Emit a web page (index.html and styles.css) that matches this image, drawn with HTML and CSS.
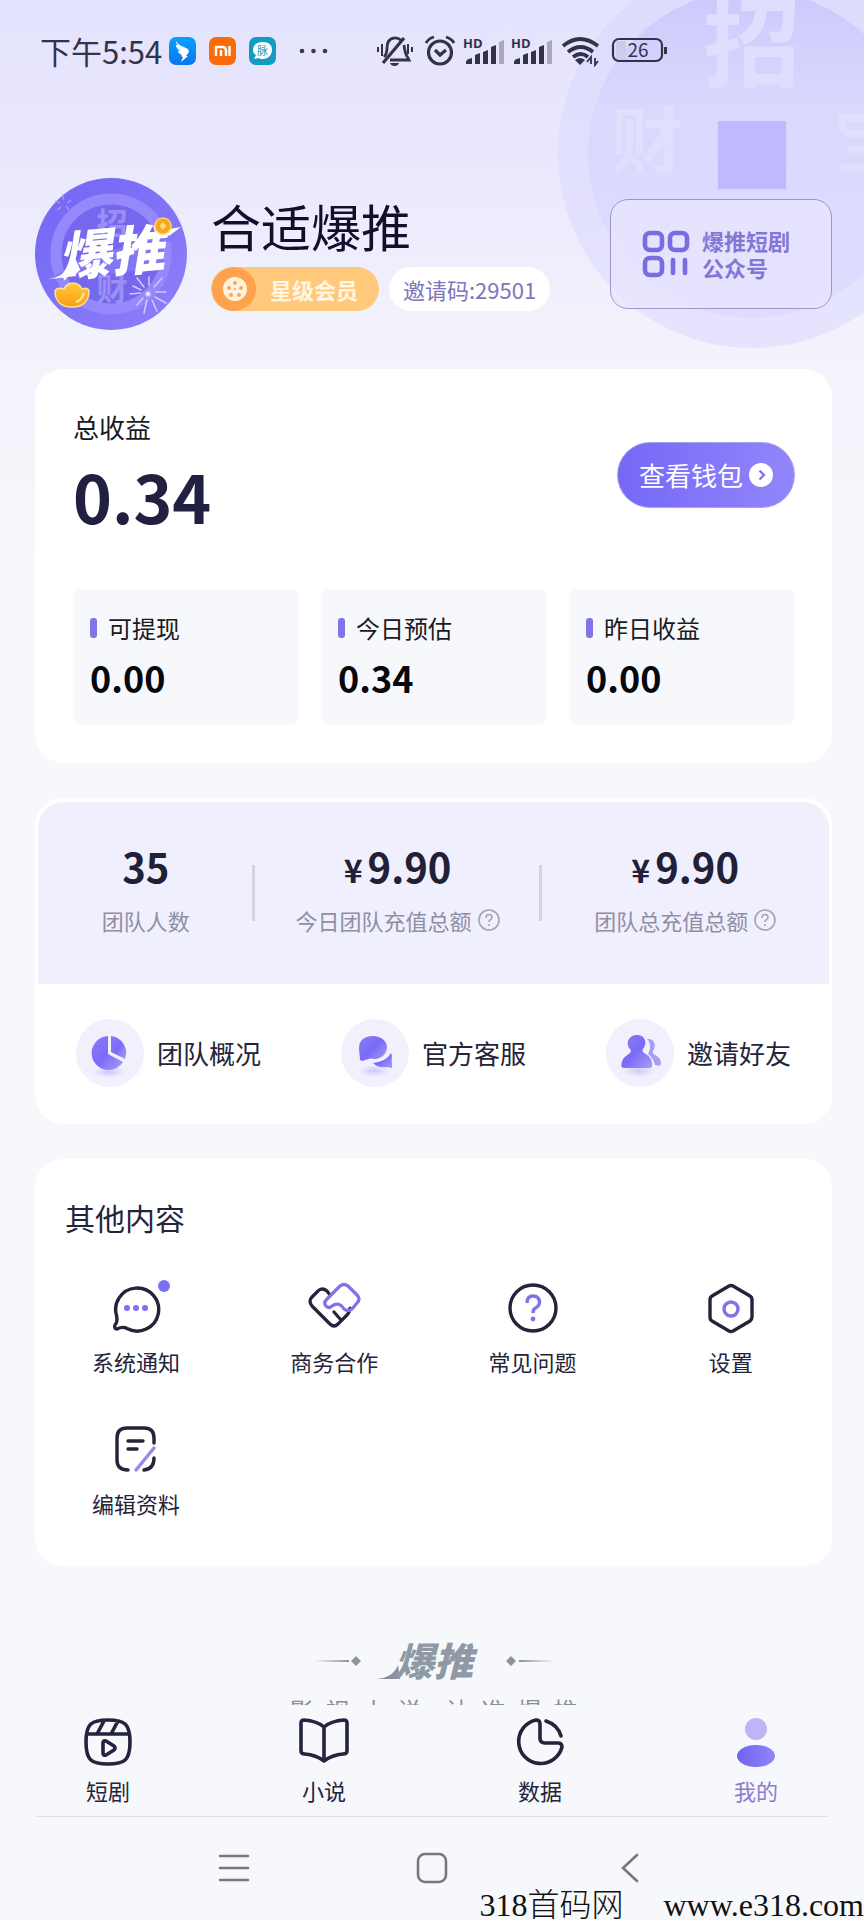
FILE: index.html
```html
<!DOCTYPE html>
<html lang="zh-CN">
<head>
<meta charset="utf-8">
<meta name="viewport" content="width=device-width, initial-scale=1">
<title>我的</title>
<link rel="stylesheet" href="styles.css">
</head>
<body>
<svg class="coin-bg" viewBox="0 41 307 349" aria-hidden="true">
  <defs>
    <linearGradient id="coinIn" x1="0" y1="0" x2="0" y2="1"><stop offset="0" stop-color="#cbc9fc"/><stop offset=".35" stop-color="#d9d8fd"/><stop offset="1" stop-color="#dfdcfd"/></linearGradient>
    <linearGradient id="coinOut" x1="0" y1="0" x2="0" y2="1"><stop offset="0" stop-color="#dcdbfd"/><stop offset="1" stop-color="#e6e4fd"/></linearGradient>
  </defs>
  <circle cx="195" cy="195" r="194" fill="url(#coinOut)"/>
  <circle cx="195" cy="195" r="164" fill="url(#coinIn)"/>
  <g class="coin-char" text-anchor="middle">
    <text x="195" y="120" font-size="98" fill="#dfdefe">招</text>
    <text x="90" y="208" font-size="72" fill="#e1dffe">财</text>
    <text x="312" y="208" font-size="72" fill="#e1dffe">宝</text>
  </g>
  <path d="M161 162h68v68h-68z" fill="#bfb9fe"/>
</svg>

<header class="status">
  <span class="time">下午5:54</span>
  <svg class="apps" viewBox="0 0 160 28" width="160" height="28" aria-hidden="true">
    <defs><linearGradient id="dd" x1="0" y1="0" x2="0" y2="1"><stop offset="0" stop-color="#0aa0fb"/><stop offset="1" stop-color="#0877f0"/></linearGradient></defs>
    <rect width="27" height="28" rx="7" fill="url(#dd)"/>
    <path d="M7 4c2 4 6 5 12 8l1 3-3 4h2l-7 6 2-5-2-1 1-1c-3-1-4-3-4-4l2 0c-3-2-4-4-4-6l2 0C7 7 7 5 7 4z" fill="#fff"/>
    <rect x="40" width="27" height="28" rx="7" fill="#fb6a07"/>
    <path d="M47 19v-9h6q4 0 4 4v5M52 13v6M60.500 9v10" fill="none" stroke="#fff" stroke-width="2.400"/>
    <rect x="80" width="27" height="28" rx="7" fill="#119dc2"/>
    <path d="M94 5c6 0 9 3 9 8s-4 9-9 9c-2 0-3 0-4-1l-5 1 2-4c-2-1-3-3-3-5 0-5 4-8 10-8z" fill="#fff"/>
    <text x="93.500" y="18" font-size="11" text-anchor="middle" fill="#119dc2">脉</text>
    <g fill="#3b3950"><circle cx="133" cy="14" r="2.300"/><circle cx="144.500" cy="14" r="2.300"/><circle cx="156" cy="14" r="2.300"/></g>
  </svg>
  <svg class="signals" viewBox="0 0 296 32" width="296" height="32" aria-hidden="true" fill="none" stroke="#34324a">
    <g stroke-width="2.800">
      <path d="M28 3 7 28" stroke-width="3.200"/>
      <path d="M8 22q3-3 3-9 0-9 7-10 4-1 8 3M28 10q1 9 4 13l1 2H14" />
      <path d="M2 12v5M6 9v12M32 9v10M36 12v5" stroke-width="2"/>
    </g>
    <path d="M14 28h9q-1 3-4.500 3T14 28z" fill="#34324a" stroke="none"/>
    <g stroke-width="3.200"><circle cx="64" cy="17.500" r="11.500"/><path d="m59 15 5 5 6-5"/><path d="M50 8q3-5 8-6M70 2q6 2 8 6" stroke-width="2.800"/></g>
    <g stroke="none" fill="#34324a" id="sig">
      <text x="87" y="13" font-size="13" class="hd">HD</text>
      <path d="M90 29v-2q0-3 6-4v6zM99 29V20l5-2v11zM107 29v-12l5-2v14zM115 29V12l5-2v19z"/>
      <path d="M123 7l5-2v24h-5z" fill="#a9a6c2"/>
    </g>
    <use href="#sig" x="48"/>
    <path d="M187 11q17-14 35 0M192 17q13-10 25 0M197 22q8-6 15 0" stroke-width="3.800"/>
    <path d="m199 25q5-4 10 0l-5 5z" fill="#34324a" stroke="none"/>
    <path d="M215 29v-7l-4 5M219 23v7l3-4" stroke-width="1.800"/>
    <rect x="240" y="6" width="10" height="19" rx="2" fill="#cfccea" stroke="none"/>
    <rect x="237" y="4" width="49" height="22" rx="6" stroke-width="2.200"/>
    <path d="M289.500 12v7" stroke-width="3"/>
    <text x="262" y="22" font-size="19" text-anchor="middle" fill="#34324a" stroke="none">26</text>
  </svg>
</header>

<main>
  <section class="profile">
    <svg class="avatar" viewBox="0 0 152 152" width="152" height="152" role="img" aria-label="爆推">
      <defs>
        <linearGradient id="av" x1="0" y1="0" x2="1" y2="1"><stop offset="0" stop-color="#7265f4"/><stop offset="1" stop-color="#8f80fa"/></linearGradient>
        <linearGradient id="go" x1="0" y1="0" x2="0" y2="1"><stop offset="0" stop-color="#ffc93c"/><stop offset="1" stop-color="#fb9d12"/></linearGradient>
      </defs>
      <circle cx="76" cy="76" r="76" fill="url(#av)"/>
      <circle cx="76" cy="76" r="55" fill="#7668ee" stroke="#9488fa" stroke-width="11"/>
      <g text-anchor="middle" fill="#9a90f4" font-weight="700" font-size="31"><text x="77" y="57">招</text><text x="77" y="122">财</text></g>
      <path d="M8 101q20-3 27-17l100-28 11-7-9 14-8 3v24l-40 4-50 5z" fill="#8378f2"/>
      <path d="M8 102q22-2 30-18l3 14q-18 2-33 4zM128 52l18-3-12 9z" fill="#fff"/>
      <text class="logo-text" transform="rotate(-5 76 76)" x="76" y="94" font-size="53" text-anchor="middle" fill="#fff">爆推</text>
      <circle cx="128" cy="48" r="8" fill="#f9a51f" stroke="#ffd36a" stroke-width="1.500"/><path d="m128 44 3.500 4-3.500 4-3.500-4z" fill="#ffd97a"/>
      <path d="M20 113q2-4 9-2 3-6 9-6t9 6q6-2 7 2c0 9-5 16-17 16s-17-7-17-16z" fill="url(#go)" stroke="#ffe09a" stroke-width="1.500"/>
      <path d="M41 124q6-2 8-9" stroke="#ffe58e" stroke-width="2.500" fill="none"/>
      <g stroke="#cfc9ff" stroke-width="1.600" stroke-linecap="round"><path d="M109 109l-7-9M114 107v-8M119 109l8-9M121 114h10M120 119l11 6M117 122l5 11M112 122l-3 13M108 120l-6 7M105 115l-10 1M106 112l-8-4"/><circle cx="113" cy="116" r="2" fill="#fff"/></g>
      <path d="M28 16v6M20 23l5 2M36 22l-4 3M22 32l4-3M34 32l-3-4" stroke="#a9a0ff" stroke-width="1.200"/>
    </svg>
    <div class="who">
      <h1>合适爆推</h1>
      <div class="tags">
        <span class="tag vip">
          <svg viewBox="0 0 46 44" width="46" height="44" aria-hidden="true"><circle cx="23" cy="22" r="22" fill="#ffa24d"/><circle cx="24" cy="22" r="12" fill="#fff3e0"/><g fill="#ffa557"><circle cx="24" cy="16" r="2"/><circle cx="18" cy="21" r="2"/><circle cx="30" cy="21" r="2"/><circle cx="24" cy="22" r="1"/><circle cx="20" cy="28" r="2"/><circle cx="28" cy="28" r="2"/></g></svg>
          <span class="vip-text">星级会员</span>
        </span>
        <span class="tag code">邀请码:29501</span>
      </div>
    </div>
    <button class="official" type="button">
      <svg viewBox="0 0 48 48" width="48" height="48" fill="none" stroke="#7a6be0" stroke-width="4.600" aria-hidden="true"><rect x="3" y="3" width="17" height="17" rx="5"/><rect x="28" y="3" width="17" height="17" rx="5"/><rect x="3" y="28" width="17" height="17" rx="5"/><path d="M31 30v13M43 30v13" stroke-linecap="round"/></svg>
      <span>爆推短剧<br>公众号</span>
    </button>
  </section>

  <section class="card income">
    <div class="total">
      <div><h2>总收益</h2><p class="big">0.34</p></div>
      <button class="wallet" type="button">查看钱包<svg viewBox="0 0 24 24" width="24" height="24" aria-hidden="true"><circle cx="12" cy="12" r="12" fill="#fff"/><path d="m10.500 7.500 4.500 4.500-4.500 4.500" fill="none" stroke="#7e72e8" stroke-width="2.200"/></svg></button>
    </div>
    <dl class="boxes">
      <div><dt>可提现</dt><dd>0.00</dd></div>
      <div><dt>今日预估</dt><dd>0.34</dd></div>
      <div><dt>昨日收益</dt><dd>0.00</dd></div>
    </dl>
  </section>

  <section class="card team">
    <dl class="stats">
      <div><dd>35</dd><dt>团队人数</dt></div>
      <div><dd><small>¥</small>9.90</dd><dt>今日团队充值总额<svg viewBox="0 0 22 22" width="22" height="22" fill="none" stroke="#a5a3b8" stroke-width="1.600" aria-hidden="true"><circle cx="11" cy="11" r="10"/><path d="M8 9q0-3.500 3-3.500t3 3q0 1.500-2 2.500-1 .5-1 2M11 15v2"/></svg></dt></div>
      <div><dd><small>¥</small>9.90</dd><dt>团队总充值总额<svg viewBox="0 0 22 22" width="22" height="22" fill="none" stroke="#a5a3b8" stroke-width="1.600" aria-hidden="true"><circle cx="11" cy="11" r="10"/><path d="M8 9q0-3.500 3-3.500t3 3q0 1.500-2 2.500-1 .5-1 2M11 15v2"/></svg></dt></div>
    </dl>
    <nav class="links">
      <a href="#team"><svg viewBox="0 0 68 68" width="68" height="68" aria-hidden="true"><defs><linearGradient id="pu" x1="0" y1="0" x2="1" y2="1"><stop offset="0" stop-color="#8a7df2"/><stop offset=".5" stop-color="#7a6bf8"/><stop offset="1" stop-color="#a89ff6"/></linearGradient><radialGradient id="sh"><stop offset="0" stop-color="#cdc7fb"/><stop offset="1" stop-color="#f2f0fd"/></radialGradient></defs><circle cx="34" cy="34" r="34" fill="#f2f0fd"/><ellipse cx="33" cy="53" rx="17" ry="6" fill="url(#sh)"/><path d="M32 17v18l15 8A17 17 0 1 1 32 17z" fill="url(#pu)"/><path d="M35 17a17 17 0 0 1 14 23l-14-7z" fill="url(#pu)"/></svg>团队概况</a>
      <a href="#service"><svg viewBox="0 0 68 68" width="68" height="68" aria-hidden="true"><circle cx="34" cy="34" r="34" fill="#f2f0fd"/><ellipse cx="33" cy="52" rx="16" ry="6" fill="url(#sh)"/><path d="M32 17c8 0 14 5 14 11 0 7-6 12-12 12-3 0-4-1-6 0l-7 2-2-1c0-4-1-8-1-12 0-8 6-12 14-12z" fill="url(#pu)"/><path d="M50 34c2 4 0 7 1 10v5l-6-1c-6 1-10-1-13-4 8-1 15-4 18-10z" fill="url(#pu)"/></svg>官方客服</a>
      <a href="#invite"><svg viewBox="0 0 68 68" width="68" height="68" aria-hidden="true"><circle cx="34" cy="34" r="34" fill="#f2f0fd"/><ellipse cx="33" cy="52" rx="16" ry="6" fill="url(#sh)"/><path d="M41 20c7-1 10 6 6 12-2 4 7 4 8 11 1 4-2 4-6 3-2-7-5-9-7-11 3-5 3-11-1-15z" fill="#a79ef5"/><path d="M31 16c8 0 11 8 6 14-3 5 8 4 9 14 1 5-1 5-4 5H18c-3 0-3-3-2-6 2-8 12-8 8-13-5-6-1-14 7-14z" fill="url(#pu)"/></svg>邀请好友</a>
    </nav>
  </section>

  <section class="card other">
    <h2>其他内容</h2>
    <nav class="grid">
      <a href="#notice"><span class="ico"><svg viewBox="0 0 54 54" width="54" height="54" fill="none" stroke="#25233a" stroke-width="3.400" stroke-linejoin="round" aria-hidden="true"><path d="M8 36A21.500 21.500 0 1 1 18 47.500Q14 45 8 48 5 48 6 44 9 41 7.500 35"/><g fill="#8073ea" stroke="none"><circle cx="18" cy="27" r="3"/><circle cx="27" cy="27" r="3"/><circle cx="36" cy="27" r="3"/></g></svg><i class="dot"></i></span>系统通知</a>
      <a href="#biz"><span class="ico"><svg viewBox="0 0 54 54" width="54" height="54" fill="none" stroke-width="3.200" stroke-linejoin="round" stroke-linecap="round" aria-hidden="true"><path d="M23 14l-3-4q-5-4-9 0l-6 6q-4 4 0 9l18 18q4 4 8 0l9-9q3-3 3-7M27 31l7 8" stroke="#25233a"/><path d="M20 18 33 5q4-3 8 0l9 9q4 4 0 8l-5 6q-4 3-8 0-5-8-12-3-3 3-6 0t1-7z" stroke="#8073ea"/></svg></span>商务合作</a>
      <a href="#faq"><span class="ico"><svg viewBox="0 0 54 54" width="54" height="54" fill="none" stroke-width="3.400" aria-hidden="true"><circle cx="27" cy="27" r="23" stroke="#25233a"/><path d="M21 22q0-7 6-7t6.500 6q0 4-4 6-2.500 1-2.500 5" stroke="#8073ea"/><circle cx="27" cy="38" r="2.400" fill="#8073ea"/></svg></span>常见问题</a>
      <a href="#settings"><span class="ico"><svg viewBox="0 0 54 54" width="54" height="54" fill="none" stroke-width="3.400" stroke-linejoin="round" aria-hidden="true"><path d="M25 5q2-1 4 0l17 10q2 1 2 4v17q0 2-2 4L29 50q-2 1-4 0L8 40q-2-1-2-4V19q0-3 2-4z" stroke="#25233a"/><circle cx="27" cy="28" r="7" stroke="#8073ea"/></svg></span>设置</a>
      <a href="#edit"><span class="ico"><svg viewBox="0 0 54 54" width="54" height="54" fill="none" stroke="#25233a" stroke-width="3.400" stroke-linecap="round" aria-hidden="true"><path d="M45 20v-5q0-10-10-10H18Q8 5 8 15v22q0 10 11 10M45 35q0 11-10 12M19 18h15M19 26h9"/><path d="M45 25 27 47" stroke="#9689ea"/></svg></span>编辑资料</a>
    </nav>
  </section>

  <footer class="slogan">
    <svg viewBox="0 0 242 40" width="242" height="40" role="img" aria-label="爆推">
      <defs><linearGradient id="l1"><stop offset="0" stop-color="#9a9da5" stop-opacity="0"/><stop offset="1" stop-color="#8c8f98"/></linearGradient><linearGradient id="l2"><stop offset="0" stop-color="#8c8f98"/><stop offset="1" stop-color="#9a9da5" stop-opacity="0"/></linearGradient></defs>
      <path d="M0 19h36v2H0z" fill="url(#l1)"/><path d="m43 15 5 5-5 5-5-5zM198 15l5 5-5 5-5-5z" fill="#8f929b"/><path d="M206 19h36v2h-36z" fill="url(#l2)"/>
      <path d="M63 38q17-1 22-14l2 14z" fill="#8a919d"/>
      <text class="logo-text" x="121" y="35" font-size="39" text-anchor="middle" fill="#8f99a5">爆推</text>
    </svg>
    <p class="tagline"><span>影</span><span>视</span><span>小</span><span>说</span><span class="gap">认</span><span>准</span><span>爆</span><span>推</span></p>
  </footer>
</main>

<nav class="tabs">
  <a href="#drama"><svg viewBox="0 0 50 50" width="50" height="50" fill="none" stroke="#25233f" stroke-width="3.600" stroke-linejoin="round" aria-hidden="true"><path d="M25 3c17 0 22 4 22 22s-5 22-22 22S3 43 3 25 8 3 25 3zM4 17h42M21 4l-7 13M35 4l-7 13M20 26q0-3 3-2l8 5q2 2 0 4l-8 5q-3 1-3-2z"/></svg>短剧</a>
  <a href="#novel"><svg viewBox="0 0 50 50" width="50" height="50" fill="none" stroke="#25233f" stroke-width="3.600" stroke-linejoin="round" aria-hidden="true"><path d="M25 10Q18 4 5 3 2 3 2 6v28q0 3 4 3 11 1 19 7 8-6 19-7 4 0 4-3V6q0-3-3-3-13 1-20 7zM25 10v34"/></svg>小说</a>
  <a href="#data"><svg viewBox="0 0 50 50" width="50" height="50" fill="none" stroke="#25233a" stroke-width="3.600" stroke-linecap="round" stroke-linejoin="round" aria-hidden="true"><path d="M21 3q4 0 4 4v14q0 5 5 5h13q4 0 4 4A22 22 0 1 1 21 3zM31 4q12 4 15 15"/></svg>数据</a>
  <a href="#me" class="active" aria-current="page"><svg viewBox="0 0 50 50" width="50" height="50" aria-hidden="true"><defs><linearGradient id="me"><stop offset="0" stop-color="#7063ee"/><stop offset="1" stop-color="#9086fb"/></linearGradient></defs><circle cx="25" cy="12" r="11" fill="#bfb4f6"/><ellipse cx="25" cy="39" rx="19" ry="11" fill="url(#me)"/></svg>我的</a>
</nav>

<div class="system">
  <button type="button" aria-label="最近任务"><svg viewBox="0 0 32 32" width="32" height="32"><path d="M2 4h28M2 16h28M2 28h28"/></svg></button>
  <button type="button" aria-label="主屏幕"><svg viewBox="0 0 32 32" width="32" height="32"><rect x="2" y="2" width="28" height="28" rx="7"/></svg></button>
  <button type="button" aria-label="返回"><svg viewBox="0 0 32 32" width="32" height="32"><path d="M23 3 9 16l14 13"/></svg></button>
</div>
<p class="mark"><span>318首码网</span><span>www.e318.com</span></p>
</body>
</html>
```
FILE: styles.css
```css
* { box-sizing: border-box; }
h1, h2, p, dl, dd, dt { margin: 0; font-weight: 400; }
a { color: inherit; text-decoration: none; }
button { font: inherit; border: 0; background: none; padding: 0; cursor: pointer; }
svg { display: block; flex: none; }

body {
  margin: 0;
  position: relative;
  min-height: 100vh;
  display: flex;
  flex-direction: column;
  font-family: "Noto Sans CJK SC", "Noto Sans", sans-serif;
  font-size: 22px;
  line-height: 32px;
  color: #25243a;
  background: #f6f8fb linear-gradient(#e4e3fe, #eae8fd 160px, #f2f2fc 330px, #f6f8fb 560px) no-repeat;
}

.coin-bg { position: absolute; top: 0; right: 0; width: 307px; height: 349px; z-index: -1; }
.coin-char { font-weight: 700; }
.logo-text { font-weight: 900; font-style: italic; }

/* status bar */
.status { display: flex; align-items: center; height: 102px; padding: 0 40px; color: #34324a; }
.time { font-size: 31px; }
.apps { margin-left: 7px; }
.signals { margin-left: 47px; }
.hd { font-family: "Open Sans", sans-serif; font-weight: 700; }

main { flex: 1; padding: 76px 32px 0 35px; }

/* profile */
.profile { display: flex; align-items: center; height: 152px; margin-bottom: 39px; }
.who { flex: 1; margin-left: 24px; }
.who h1 { font-size: 50px; line-height: 56px; color: #110f2b; margin-bottom: 14px; }
.tags { display: flex; gap: 10px; }
.tag { display: flex; align-items: center; height: 44px; border-radius: 22px; }
.vip { width: 168px; background: #ffc97c; color: #fff6e4; font-weight: 700; }
.vip-text { margin-left: 13px; }
.code { padding: 0 14px; background: #fff; color: #7e76b8; }
.official {
  display: flex; align-items: center; justify-content: center; gap: 12px;
  width: 222px; height: 110px; padding-right: 10px;
  border: 1px solid #9d97c6; border-radius: 18px;
  background: rgba(232, 229, 254, .75);
  color: #8277d6; font-weight: 700; line-height: 27px; text-align: left;
}

/* cards */
.card { background: #fff; border-radius: 28px; margin-bottom: 35px; }

.income { padding: 39px 37px 38px 38px; }
.total { display: flex; justify-content: space-between; height: 181px; }
.total h2 { font-size: 26px; line-height: 38px; color: #1a1a22; }
.big { font-size: 66px; line-height: 98px; font-weight: 700; color: #212040; }
.wallet {
  display: flex; align-items: center; justify-content: center; gap: 6px;
  width: 178px; height: 66px; margin-top: 34px; border-radius: 33px;
  border: 1px solid #a9a0f2;
  background: linear-gradient(90deg, #7568f7, #9286fb);
  color: #fff; font-size: 26px;
}
.boxes { display: grid; grid-template-columns: repeat(3, 1fr); gap: 22px; }
.boxes div { height: 136px; padding: 22px 17px; border-radius: 8px; background: #f7f8fb; }
.boxes dt { display: flex; align-items: center; gap: 11px; font-size: 24px; line-height: 34px; color: #1a1a22; }
.boxes dt::before { content: ""; width: 7px; height: 20px; border-radius: 3px; background: #8175ea; }
.boxes dd { font-size: 36px; line-height: 64px; font-weight: 700; color: #08080c; }

.team { padding: 4px 3px 0; }
.stats { display: grid; grid-template-columns: 3fr 4fr 4fr; height: 182px; padding-top: 34px; background: #f0effe; border-radius: 26px 26px 0 0; text-align: center; }
.stats div { position: relative; }
.stats div + div::before { content: ""; position: absolute; left: -2px; top: 29px; width: 3px; height: 56px; background: #d3d1e6; }
.stats dd { font-size: 40px; line-height: 60px; height: 64px; font-weight: 700; color: #212036; }
.stats small { font-size: 32px; line-height: 32px; margin-right: 5px; }
.stats dt { display: flex; justify-content: center; align-items: center; gap: 6px; line-height: 40px; color: #908ea3; }
.links { display: flex; justify-content: space-between; align-items: center; height: 140px; padding: 0 38px 2px; font-size: 26px; }
.links a { display: flex; align-items: center; gap: 13px; }

.other { padding: 37px 2px 27px; }
.other h2 { font-size: 30px; line-height: 42px; padding-left: 28px; margin-bottom: 43px; }
.grid { display: grid; grid-template-columns: repeat(4, 1fr); row-gap: 26px; }
.grid a { display: flex; flex-direction: column; align-items: center; gap: 10px; height: 116px; }
.ico { position: relative; }
.dot { position: absolute; top: -1px; right: -7px; width: 12px; height: 12px; border-radius: 50%; background: #7c70f2; }

/* slogan */
.slogan { display: flex; flex-direction: column; align-items: center; gap: 14px; padding-top: 40px; }
.tagline { display: flex; gap: 12px; height: 10px; overflow: hidden; font-size: 24px; line-height: 30px; color: #8b8e96; }
.tagline .gap { margin-left: 12px; }

/* tab bar */
.tabs { display: grid; grid-template-columns: repeat(4, 1fr); padding: 11px 0 10px; }
.tabs a { display: flex; flex-direction: column; align-items: center; gap: 7px; }
.tabs .active { color: #8b7cd0; }

/* system navigation */
.system { display: grid; grid-template-columns: repeat(3, 1fr); margin: 0 37px; padding: 35px 98px 36px; border-top: 1px solid #dcdde3; }
.system button { display: grid; place-items: center; }
.system svg { fill: none; stroke: #77787d; stroke-width: 2.600; stroke-linecap: round; }

.mark {
  position: absolute; right: 0; bottom: 0;
  display: flex; gap: 40px;
  font-family: "Liberation Serif", "Noto Sans CJK SC", serif;
  font-size: 32px; line-height: 30px; font-weight: 300; color: #111;
}
```
